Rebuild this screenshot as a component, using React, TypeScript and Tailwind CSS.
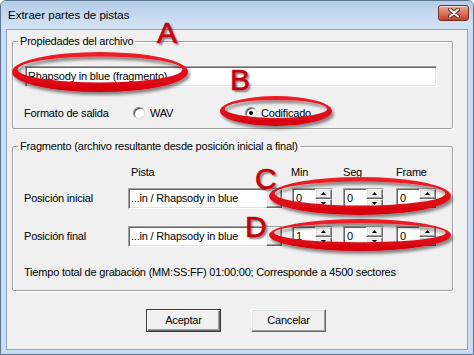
import React from "react";

const sunken =
  "bg-white border border-t-[#a0a0a0] border-l-[#a0a0a0] border-r-white border-b-white shadow-[inset_1px_1px_0_#696969,inset_-1px_-1px_0_#e3e3e3]";
const raised =
  "bg-[#f0f0f0] border border-t-white border-l-white border-r-[#696969] border-b-[#696969] shadow-[inset_-1px_-1px_0_#a0a0a0,inset_1px_1px_0_#e3e3e3]";

function Arrow({ up }: { up?: boolean }) {
  return (
    <svg width="5" height="3" viewBox="0 0 5 3" className="block">
      {up ? <path d="M2.5 0 L5 3 L0 3 Z" fill="#000" /> : <path d="M0 0 L5 0 L2.5 3 Z" fill="#000" />}
    </svg>
  );
}

function Spin({ value }: { value: string }) {
  return (
    <div className={`w-[41px] h-[21px] flex ${sunken}`}>
      <div className="flex-1 pl-[3px] leading-[19px]">{value}</div>
      <div className="w-[17px] flex flex-col">
        <div className={`flex-1 flex items-center justify-center ${raised}`}>
          <Arrow up />
        </div>
        <div className={`flex-1 flex items-center justify-center ${raised}`}>
          <Arrow />
        </div>
      </div>
    </div>
  );
}

function Combo() {
  return (
    <div className={`w-[155px] h-[21px] flex ${sunken}`}>
      <div className="flex-1 pl-[2px] leading-[19px] whitespace-nowrap overflow-hidden">...in / Rhapsody in blue</div>
      <div className={`w-[16px] flex items-center justify-center ${raised}`}>
        <svg width="7" height="4" viewBox="0 0 7 4">
          <path d="M0 0 L7 0 L3.5 4 Z" fill="#000" />
        </svg>
      </div>
    </div>
  );
}

function Radio({ checked }: { checked?: boolean }) {
  return (
    <span className="w-[12px] h-[12px] rounded-full bg-white border border-t-[#8a8a8a] border-l-[#8a8a8a] border-r-[#dcdcdc] border-b-[#dcdcdc] shadow-[inset_1px_1px_0_#505050] flex items-center justify-center">
      {checked && <span className="w-[4px] h-[4px] rounded-full bg-black" />}
    </span>
  );
}

const ring = (cx: number, cy: number, rx: number, ry: number, t: number) => {
  const o = `M ${cx - rx} ${cy} a ${rx} ${ry} 0 1 0 ${2 * rx} 0 a ${rx} ${ry} 0 1 0 ${-2 * rx} 0 Z`;
  const irx = rx - t * 0.8;
  const iry = ry - t;
  const icy = cy - t * 0.35;
  const i = `M ${cx - irx} ${icy} a ${irx} ${iry} 0 1 0 ${2 * irx} 0 a ${irx} ${iry} 0 1 0 ${-2 * irx} 0 Z`;
  return o + " " + i;
};

const letter =
  "absolute text-[30px] leading-[30px] text-[#c8000c] font-['Liberation_Sans',Arial,sans-serif] [-webkit-text-stroke:0.7px_#c8000c] [text-shadow:2px_2px_2px_rgba(0,0,0,0.5)]";

export default function App() {
  return (
    <div className="relative w-[474px] h-[355px] overflow-hidden bg-[#c9dcf1] border border-[#5d7590] rounded-t-[6px] flex flex-col font-['Liberation_Sans',Arial,sans-serif] text-[11px] tracking-[-0.2px] text-black">
      {/* Title bar */}
      <div className="h-[28px] flex items-start bg-gradient-to-b from-[#b4cce8] via-[#c6daf0] to-[#d3e3f5]">
        <div className="pl-[7px] pt-[7px] text-[11.5px] leading-[14px] tracking-normal text-black">Extraer partes de pistas</div>
        <div className="flex-1" />
        <div className="mt-[4px] mr-[4px] w-[31px] h-[16px] rounded-[3px] border border-[#7c2b21] bg-gradient-to-b from-[#e9a897] via-[#d77560] to-[#c2402e] shadow-[inset_0_1px_0_rgba(255,255,255,0.6)] flex items-center justify-center">
          <svg width="12" height="10" viewBox="0 0 12 10">
            <path d="M2 1.5 L10 8.5 M10 1.5 L2 8.5" stroke="#5a2018" strokeWidth="4" strokeLinecap="round" />
            <path d="M2 1.5 L10 8.5 M10 1.5 L2 8.5" stroke="#fff" strokeWidth="2.2" strokeLinecap="round" />
          </svg>
        </div>
      </div>

      {/* Client area */}
      <div className="mx-[5px] h-[321px] border border-[#8ea6c1] bg-[#f0f0f0] flex flex-col">
        {/* Group 1 */}
        <fieldset className="ml-[5px] mt-[5px] w-[441px] border border-[#a0a0a0] rounded-[2px] shadow-[inset_1px_1px_0_#fff,1px_1px_0_#fff] pt-[18px] pb-[8px]">
          <legend className="ml-[5px] px-[2px] leading-[13px]">Propiedades del archivo</legend>
          <div className={`ml-[12px] w-[412px] h-[21px] pl-[2px] leading-[19px] ${sunken}`}>Rhapsody in blue (fragmento)</div>
          <div className="mt-[19px] h-[14px] flex items-center">
            <div className="ml-[11px] w-[109px]">Formato de salida</div>
            <div className="w-[112px] flex items-center gap-[5px]">
              <Radio />
              <span>WAV</span>
            </div>
            <div className="flex items-center gap-[4px]">
              <Radio checked />
              <span>Codificado</span>
            </div>
          </div>
        </fieldset>

        {/* Group 2 */}
        <fieldset className="ml-[5px] mt-[11px] w-[441px] border border-[#a0a0a0] rounded-[2px] shadow-[inset_1px_1px_0_#fff,1px_1px_0_#fff] pt-[13px] pb-[11px]">
          <legend className="ml-[5px] px-[2px] leading-[13px]">Fragmento (archivo resultante desde posición inicial a final)</legend>
          <div className="h-[13px] leading-[13px] flex">
            <div className="w-[118px]" />
            <div className="w-[160px]">Pista</div>
            <div className="w-[52px]">Min</div>
            <div className="w-[53px]">Seg</div>
            <div>Frame</div>
          </div>
          <div className="mt-[9px] flex items-center">
            <div className="ml-[11px] w-[104px]">Posición inicial</div>
            <Combo />
            <div className="ml-[9px]"><Spin value="0" /></div>
            <div className="ml-[10px]"><Spin value="0" /></div>
            <div className="ml-[12px]"><Spin value="0" /></div>
          </div>
          <div className="mt-[17px] flex items-center">
            <div className="ml-[11px] w-[104px]">Posición final</div>
            <Combo />
            <div className="ml-[9px]"><Spin value="1" /></div>
            <div className="ml-[10px]"><Spin value="0" /></div>
            <div className="ml-[12px]"><Spin value="0" /></div>
          </div>
          <div className="mt-[19px] ml-[11px] h-[13px] leading-[13px]">
            Tiempo total de grabación (MM:SS:FF) 01:00:00; Corresponde a 4500 sectores
          </div>
        </fieldset>

        {/* Buttons */}
        <div className="mt-[18px] flex">
          <div className="ml-[139px] w-[75px] h-[23px] border border-[#3a3a3a] bg-[#f0f0f0] shadow-[inset_1px_1px_0_#fff,inset_-1px_-1px_0_#696969,inset_-2px_-2px_0_#a0a0a0] flex items-center justify-center">
            Aceptar
          </div>
          <div className={`ml-[30px] w-[75px] h-[23px] flex items-center justify-center ${raised}`}>Cancelar</div>
        </div>
      </div>

      {/* Red annotations */}
      <svg className="absolute left-[-1px] top-[-1px] pointer-events-none" width="474" height="355" viewBox="0 0 474 355">
        <defs>
          <filter id="sh" x="-10%" y="-30%" width="120%" height="170%">
            <feDropShadow dx="2" dy="3" stdDeviation="1.6" floodColor="#000" floodOpacity="0.45" />
          </filter>
          <linearGradient id="rg" x1="0" y1="0" x2="0" y2="1">
            <stop offset="0" stopColor="#f0202a" />
            <stop offset="1" stopColor="#d6000c" />
          </linearGradient>
        </defs>
        <g filter="url(#sh)" fill="url(#rg)" fillRule="evenodd">
          <path d={ring(100, 72, 88, 20, 7)} />
          <path d={ring(276, 111, 56, 15, 6)} />
          <path d={ring(360, 196, 91, 19, 7)} />
          <path d={ring(360, 235, 91, 16, 6.5)} />
        </g>
      </svg>
      <span className={`${letter} left-[156px] top-[17px]`}>A</span>
      <span className={`${letter} left-[229px] top-[64px]`}>B</span>
      <span className={`${letter} left-[254px] top-[163px]`}>C</span>
      <span className={`${letter} left-[244px] top-[211px]`}>D</span>
    </div>
  );
}
